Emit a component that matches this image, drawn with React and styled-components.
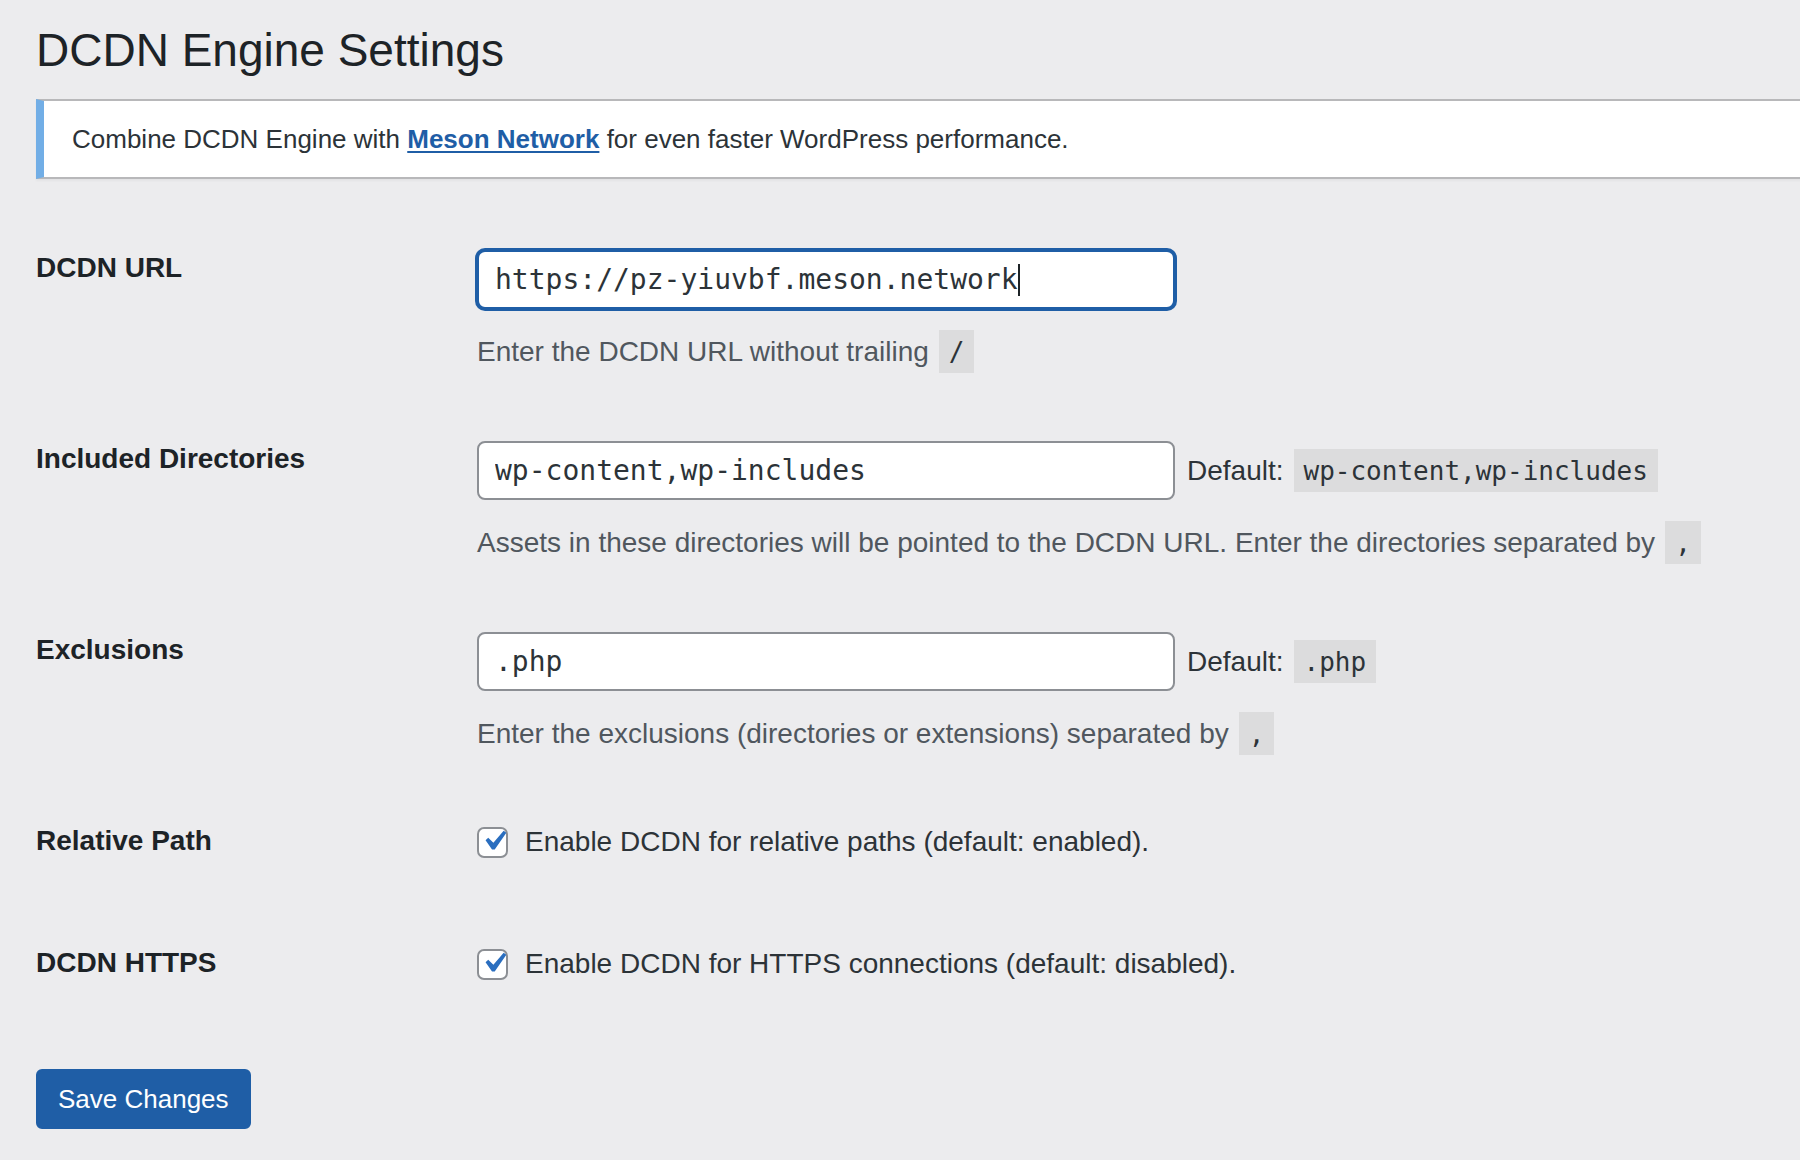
import React from 'react';
import styled, { createGlobalStyle } from 'styled-components';

// WordPress admin palette, as it shows in the screenshot
const wpBg = '#ececee';
const wpText = '#1d2327';
const wpMuted = '#50575e';
const wpBlue = '#1f5ea6';
const wpBorder = '#8c8f94';
const codeBg = '#dcdcdd';

const GlobalStyle = createGlobalStyle`
  html, body {
    margin: 0;
    padding: 0;
    background: ${wpBg};
    overflow-x: hidden;
  }
  body {
    font-family: "Liberation Sans", Arial, sans-serif;
    color: ${wpText};
  }
`;

const Wrap = styled.div`
  padding: 20px 0 40px 36px;
  min-height: 100vh;
  box-sizing: border-box;
`;

const Title = styled.h1`
  margin: 0;
  font-size: 46px;
  font-weight: 400;
  line-height: 60px;
  color: ${wpText};
`;

const Notice = styled.div`
  margin: 19px -40px 0 0;
  background: #fff;
  border: 2px solid #b8b8ba;
  border-left: 8px solid #72aee6;
  padding: 0 24px 0 28px;
  height: 76px;
  display: flex;
  align-items: center;
  font-size: 26px;
  color: #2c3338;
  box-shadow: 0 2px 2px rgba(0, 0, 0, 0.04);
`;

const Link = styled.a`
  color: ${wpBlue};
  font-weight: 700;
  text-decoration: underline;
  text-underline-offset: 3px;
  text-decoration-thickness: 2px;
`;

const Form = styled.form`
  margin-top: 71px;
  display: flex;
  flex-direction: column;
  gap: 68px;
`;

const Row = styled.div`
  display: flex;
  align-items: flex-start;
`;

const Label = styled.div`
  width: 441px;
  flex-shrink: 0;
  font-size: 28px;
  font-weight: 700;
  line-height: 36px;
  color: ${wpText};
`;

const Field = styled.div`
  display: flex;
  flex-direction: column;
  min-height: ${p => p.$minHeight || 0}px;
`;

const InputLine = styled.div`
  display: flex;
  align-items: center;
  gap: 12px;
`;

const TextInput = styled.input`
  box-sizing: border-box;
  width: 698px;
  height: 59px;
  margin: 0;
  padding: 0 16px;
  border: 2px solid ${wpBorder};
  border-radius: 8px;
  background: #fff;
  font-family: "DejaVu Sans Mono", "Liberation Mono", monospace;
  font-size: 28px;
  color: #2c3338;
  outline: none;
`;

const Caret = styled.span`
  display: inline-block;
  width: 2px;
  height: 32px;
  background: #1d2327;
  vertical-align: middle;
`;

// the focused URL field, drawn with its caret
const FocusedInput = styled.div`
  box-sizing: border-box;
  width: 698px;
  height: 59px;
  padding: 0 16px;
  border: 2px solid ${wpBlue};
  box-shadow: 0 0 0 2px ${wpBlue};
  border-radius: 8px;
  background: #fff;
  display: flex;
  align-items: center;
  font-family: "DejaVu Sans Mono", "Liberation Mono", monospace;
  font-size: 28px;
  color: #2c3338;
  white-space: pre;
`;

const DefaultText = styled.span`
  font-size: 28px;
  color: #2c3338;
  display: flex;
  align-items: center;
  gap: 10px;
`;

const Code = styled.code`
  display: inline-block;
  background: ${codeBg};
  font-family: "DejaVu Sans Mono", "Liberation Mono", monospace;
  font-size: 26px;
  line-height: 33px;
  padding: 6px 10px 4px;
  color: #2c3338;
`;

const Description = styled.p`
  margin: 21px 0 0;
  font-size: 28px;
  line-height: 43px;
  color: ${wpMuted};
  display: flex;
  align-items: center;
  gap: 10px;
`;

const CheckLine = styled.label`
  display: flex;
  align-items: center;
  gap: 17px;
  height: 38px;
  font-size: 28px;
  color: #2c3338;
`;

const CheckBox = styled.span`
  box-sizing: border-box;
  width: 31px;
  height: 31px;
  border: 2px solid ${wpBorder};
  border-radius: 7px;
  background: #fff;
  display: flex;
  align-items: center;
  justify-content: center;
  flex-shrink: 0;
  overflow: visible;

  svg {
    flex-shrink: 0;
    margin: -2px -6px 0 -4px;
  }
`;

const SubmitRow = styled.div`
  margin-top: 70px;
`;

const Button = styled.button`
  height: 60px;
  padding: 0 20px;
  border: 2px solid ${wpBlue};
  border-radius: 6px;
  background: ${wpBlue};
  color: #fff;
  font-family: "Liberation Sans", Arial, sans-serif;
  font-size: 26px;
  cursor: pointer;
`;

const Check = () => (
  <CheckBox>
    <svg width="40" height="40" viewBox="0 0 20 20">
      <path
        d="M14.83 4.89l1.34.94-5.81 8.38H9.02L5.78 9.67l1.34-1.25 2.57 2.4z"
        fill="#2a6ebf"
      />
    </svg>
  </CheckBox>
);

const App = () => {
  return (
    <Wrap>
      <GlobalStyle />
      <Title>DCDN Engine Settings</Title>
      <Notice>
        <span>
          Combine DCDN Engine with <Link href="#">Meson Network</Link> for even faster WordPress performance.
        </span>
      </Notice>

      <Form onSubmit={e => e.preventDefault()}>
        <Row>
          <Label>DCDN URL</Label>
          <Field>
            <FocusedInput>
              https://pz-yiuvbf.meson.network<Caret />
            </FocusedInput>
            <Description>
              Enter the DCDN URL without trailing <Code>/</Code>
            </Description>
          </Field>
        </Row>

        <Row>
          <Label>Included Directories</Label>
          <Field>
            <InputLine>
              <TextInput type="text" defaultValue="wp-content,wp-includes" />
              <DefaultText>
                Default: <Code>wp-content,wp-includes</Code>
              </DefaultText>
            </InputLine>
            <Description>
              Assets in these directories will be pointed to the DCDN URL. Enter the directories separated by <Code>,</Code>
            </Description>
          </Field>
        </Row>

        <Row>
          <Label>Exclusions</Label>
          <Field>
            <InputLine>
              <TextInput type="text" defaultValue=".php" />
              <DefaultText>
                Default: <Code>.php</Code>
              </DefaultText>
            </InputLine>
            <Description>
              Enter the exclusions (directories or extensions) separated by <Code>,</Code>
            </Description>
          </Field>
        </Row>

        <Row>
          <Label>Relative Path</Label>
          <Field $minHeight={54}>
            <CheckLine>
              <Check />
              Enable DCDN for relative paths (default: enabled).
            </CheckLine>
          </Field>
        </Row>

        <Row>
          <Label>DCDN HTTPS</Label>
          <Field $minHeight={54}>
            <CheckLine>
              <Check />
              Enable DCDN for HTTPS connections (default: disabled).
            </CheckLine>
          </Field>
        </Row>
      </Form>

      <SubmitRow>
        <Button type="submit">Save Changes</Button>
      </SubmitRow>
    </Wrap>
  );
};

export default App;
